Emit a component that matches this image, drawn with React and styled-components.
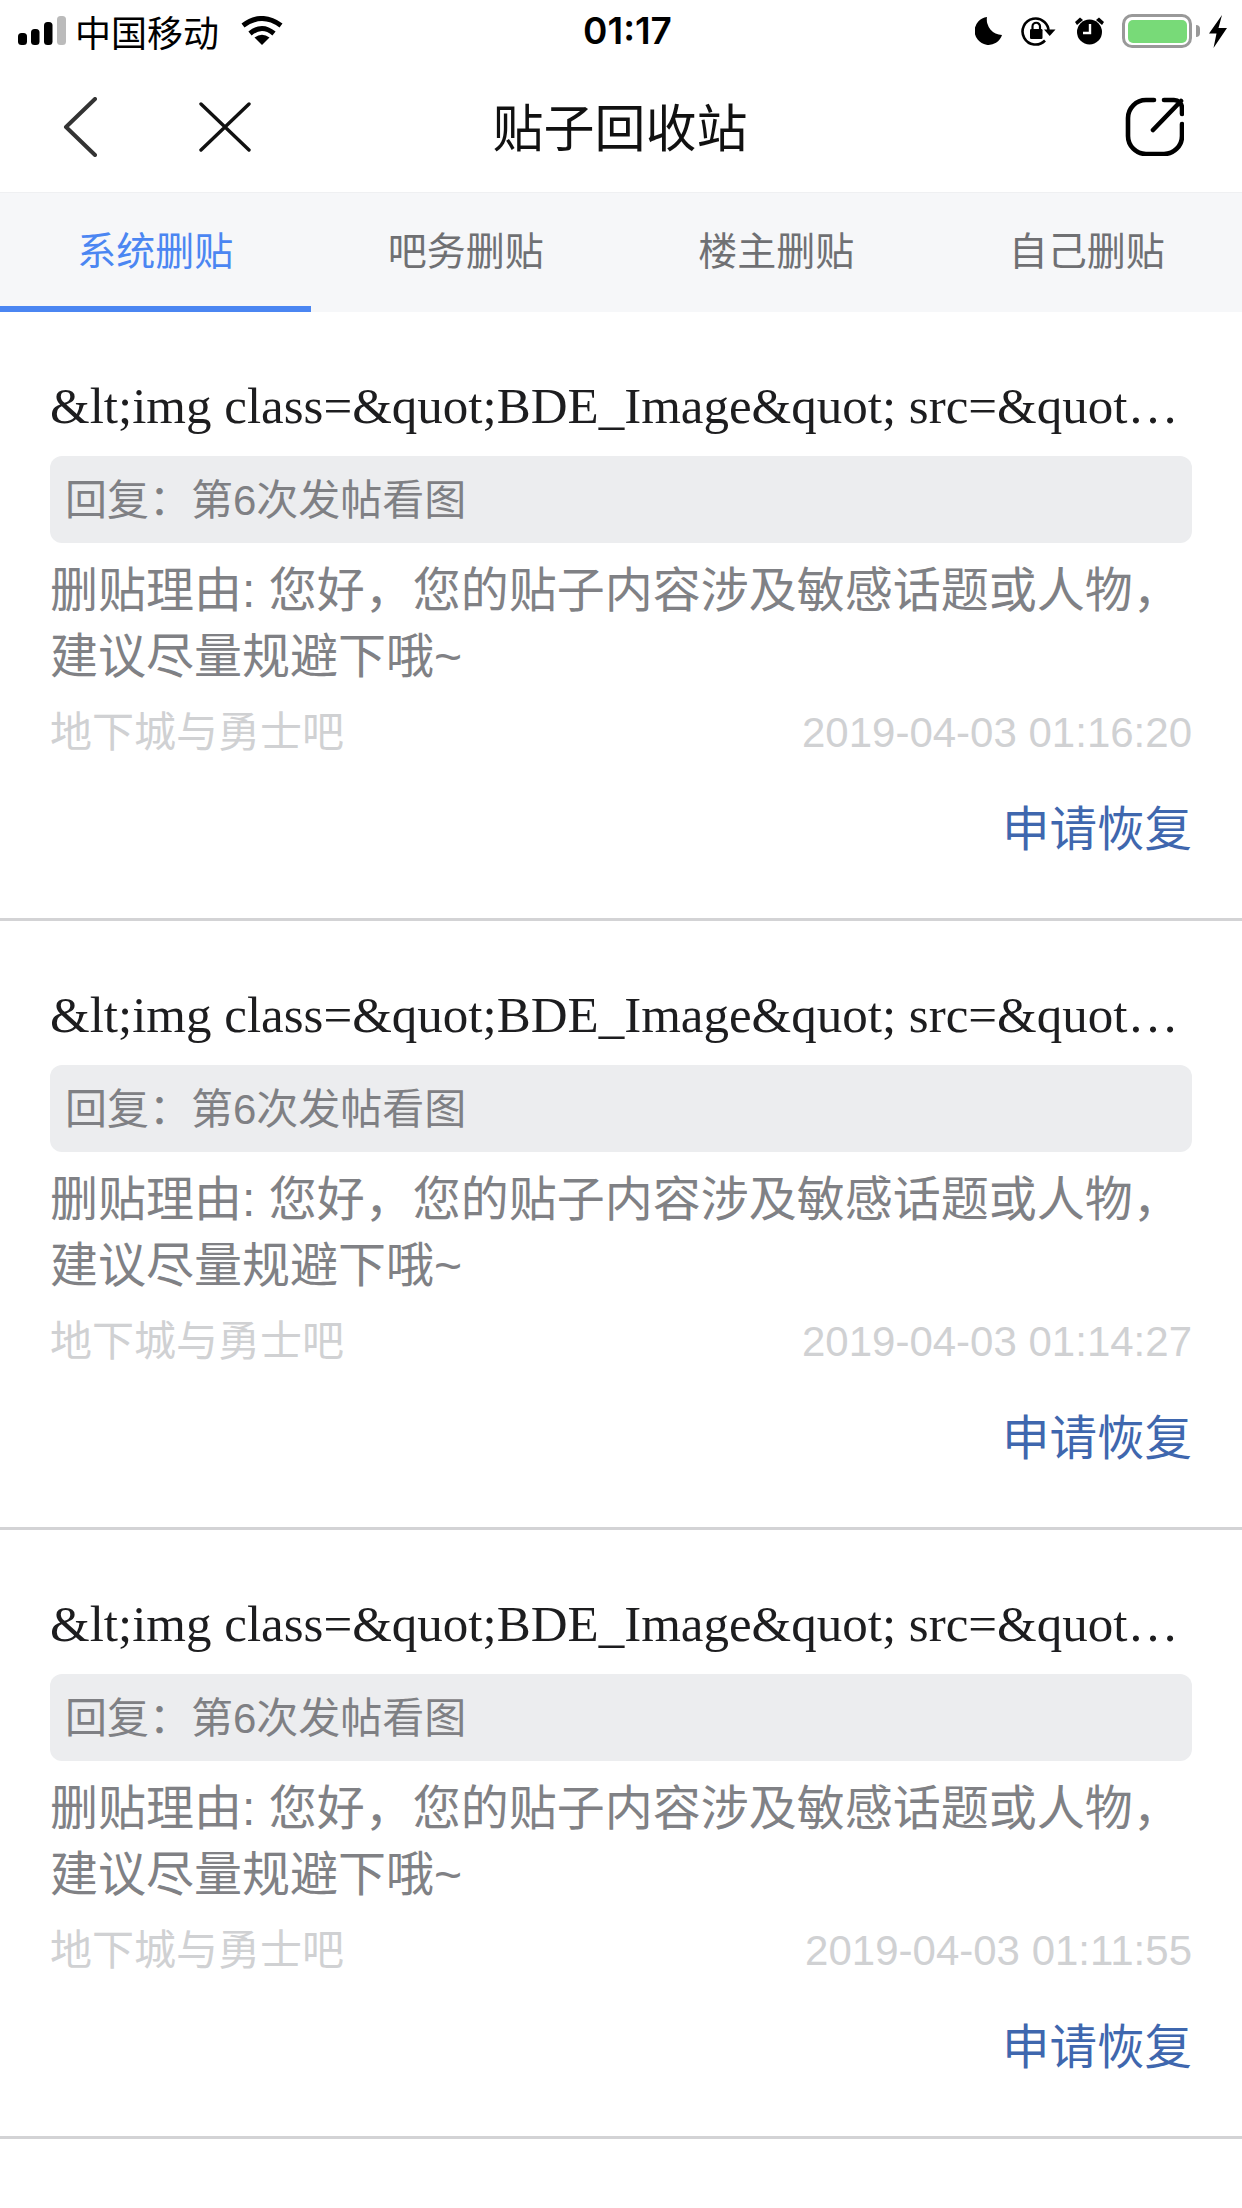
import React from "react";
import styled, { createGlobalStyle } from "styled-components";

const Global = createGlobalStyle`
  html, body { margin: 0; padding: 0; background: #fff; }
  * { box-sizing: border-box; }
`;
const SANS = `"Liberation Sans", "Noto Sans CJK SC", sans-serif`;
const SERIF = `"Liberation Serif", "Noto Sans CJK SC", serif`;

const Page = styled.div`
  width: 1242px;
  height: 2208px;
  overflow: hidden;
  background: #fff;
  font-family: ${SANS};
`;
const StatusBar = styled.div`
  height: 62px;
  display: grid;
  grid-template-columns: 1fr auto 1fr;
  align-items: center;
  padding: 0 15px 0 18px;
  color: #000;
`;
const StatusLeft = styled.div`
  display: flex;
  align-items: center;
`;
const Carrier = styled.span`
  font-family: "Noto Sans CJK SC", sans-serif;
  font-size: 36px;
  line-height: 40px;
  margin: 0 22px 0 9px;
`;
const Clock = styled.span`
  font-family: Inter, sans-serif;
  font-weight: 600;
  font-size: 37px;
  line-height: 40px;
  margin-left: 10px;
`;
const StatusRight = styled.div`
  display: flex;
  align-items: center;
  justify-content: flex-end;
  gap: 19px;
`;
const BatteryGroup = styled.div`
  display: flex;
  align-items: center;
  margin-left: -1px;
`;
const Battery = styled.div`
  width: 70px;
  height: 34px;
  border: 3.5px solid #999;
  border-radius: 10px;
  padding: 2.5px;
  position: relative;
  &::after {
    content: "";
    position: absolute;
    right: -11px;
    top: 7.5px;
    width: 4px;
    height: 12px;
    background: #999;
    border-radius: 0 4px 4px 0;
  }
`;
const BatteryFill = styled.div`
  height: 100%;
  background: #78da78;
  border-radius: 5px;
`;
const Bolt = styled.svg`
  margin-left: 17px;
`;
const NavBar = styled.div`
  height: 130px;
  display: grid;
  grid-template-columns: 1fr auto 1fr;
  align-items: center;
  padding: 0 58px 2px 63px;
`;
const NavLeft = styled.div`
  display: flex;
  align-items: center;
  gap: 102px;
  margin-top: 2px;
`;
const NavRight = styled.div`
  display: flex;
  justify-content: flex-end;
`;
const Title = styled.h1`
  margin: 0 7px 3px 0;
  font-family: "Noto Sans CJK SC", sans-serif;
  font-weight: 400;
  font-size: 51px;
  line-height: 70px;
  color: #111;
`;
const Tabs = styled.div`
  height: 120px;
  display: grid;
  grid-template-columns: repeat(4, 1fr);
  background: #f6f7f9;
  border-top: 1px solid #eff0f2;
`;
const Tab = styled.div`
  display: flex;
  align-items: center;
  justify-content: center;
  padding-bottom: 3px;
  font-family: "Noto Sans CJK SC", sans-serif;
  font-size: 39px;
  color: ${p => (p.$active ? "#4b86f2" : "#6f7073")};
  border-bottom: 6px solid ${p => (p.$active ? "#4b86f2" : "transparent")};
`;
const Card = styled.article`
  height: 609px;
  padding: 64px 50px 0;
  border-bottom: 3px solid #d3d3d5;
`;
const PostTitle = styled.div`
  font-family: ${SERIF};
  font-size: 51px;
  line-height: 60px;
  color: #1d1d1f;
  white-space: nowrap;
`;
const Quote = styled.div`
  height: 87px;
  margin-top: 20px;
  padding: 0 15px 6px;
  display: flex;
  align-items: center;
  background: #ecedef;
  border-radius: 12px;
  font-size: 42px;
  color: #7f8084;
`;
const Reason = styled.div`
  margin-top: 15px;
  font-size: 48px;
  line-height: 66px;
  color: #808185;
`;
const Meta = styled.div`
  margin-top: 18px;
  display: flex;
  justify-content: space-between;
  align-items: center;
  font-size: 42px;
  line-height: 50px;
  color: #d0d1d3;
`;
const Action = styled.div`
  margin-top: 42px;
  text-align: right;
  font-size: 47.5px;
  line-height: 60px;
  color: #3f67ae;
`;

const posts = ["01:16:20", "01:14:27", "01:11:55"];
const tabs = ["系统删贴", "吧务删贴", "楼主删贴", "自己删贴"];

const Signal = () => (
  <svg width="48" height="30" viewBox="0 0 48 30">
    <rect x="0" y="17" width="9" height="12" rx="3.5" fill="#000" />
    <rect x="13" y="13" width="8.5" height="16" rx="3.5" fill="#000" />
    <rect x="26" y="6" width="8.5" height="23" rx="3.5" fill="#000" />
    <rect x="39" y="0" width="9" height="29" rx="3.5" fill="#bbb" />
  </svg>
);
const Wifi = () => (
  <svg width="42" height="30" viewBox="0 0 42 30">
    <path d="M2 9.5Q21 -4.5 40 9.5" fill="none" stroke="#000" strokeWidth="5" />
    <path d="M9 17.5Q21 7.5 33 17.5" fill="none" stroke="#000" strokeWidth="5" />
    <path d="M21 29L13.5 21.5Q21 16 28.5 21.5Z" fill="#000" />
  </svg>
);
const Moon = () => (
  <svg width="27" height="28" viewBox="0 0 27 28">
    <path d="M12 0A14 14 0 1 0 27 18A15.5 15.5 0 0 1 12 0Z" fill="#000" />
  </svg>
);
const RotationLock = () => (
  <svg width="35" height="30" viewBox="0 0 35 30">
    <path d="M27.5 17A13 13 0 1 0 24 24.5" fill="none" stroke="#000" strokeWidth="2.6" />
    <path d="M23 13.5H34.5L28.7 20Z" fill="#000" />
    <rect x="9" y="13" width="12.5" height="10" rx="1.2" fill="#000" />
    <path d="M11.5 13V10.5A3.7 3.7 0 0 1 19 10.5V13" fill="none" stroke="#000" strokeWidth="2.2" />
  </svg>
);
const Alarm = () => (
  <svg width="29" height="28" viewBox="0 0 29 28">
    <circle cx="14.5" cy="15" r="12.5" fill="#000" />
    <path d="M15 7V16H8" fill="none" stroke="#fff" strokeWidth="2.4" />
    <path d="M0 5L5 0.5L8 3L2 8Z" fill="#000" />
    <path d="M29 5L24 0.5L21 3L27 8Z" fill="#000" />
  </svg>
);
const Back = () => (
  <svg width="34" height="60" viewBox="0 0 34 60">
    <path d="M32 2L3 30L32 58" fill="none" stroke="#333" strokeWidth="4" strokeLinecap="round" strokeLinejoin="round" />
  </svg>
);
const Close = () => (
  <svg width="52" height="50" viewBox="0 0 52 50">
    <path d="M2 2L50 48M50 2L2 48" fill="none" stroke="#111" strokeWidth="3.4" strokeLinecap="round" />
  </svg>
);
const Share = () => (
  <svg width="60" height="60" viewBox="0 0 60 60">
    <path
      d="M30 4H22A18 18 0 0 0 4 22V40A18 18 0 0 0 22 58H40A18 18 0 0 0 58 40V28M58 18V12A8 8 0 0 0 50 4H40M57 5L29 34"
      fill="none"
      stroke="#000"
      strokeWidth="4.6"
      strokeLinecap="round"
    />
  </svg>
);

export default function App() {
  return (
    <Page>
      <Global />
      <StatusBar>
        <StatusLeft>
          <Signal />
          <Carrier>中国移动</Carrier>
          <Wifi />
        </StatusLeft>
        <Clock>01:17</Clock>
        <StatusRight>
          <Moon />
          <RotationLock />
          <Alarm />
          <BatteryGroup>
            <Battery>
              <BatteryFill />
            </Battery>
            <Bolt width="18" height="33" viewBox="0 0 18 33">
              <path d="M13 0L0 18.5H7.5L4.5 33L18 13H9.5Z" fill="#000" />
            </Bolt>
          </BatteryGroup>
        </StatusRight>
      </StatusBar>
      <NavBar>
        <NavLeft>
          <Back />
          <Close />
        </NavLeft>
        <Title>贴子回收站</Title>
        <NavRight>
          <Share />
        </NavRight>
      </NavBar>
      <Tabs>
        {tabs.map((t, i) => (
          <Tab key={t} $active={i === 0}>{t}</Tab>
        ))}
      </Tabs>
      {posts.map(time => (
        <Card key={time}>
          <PostTitle>&amp;lt;img class=&amp;quot;BDE_Image&amp;quot; src=&amp;quot…</PostTitle>
          <Quote>回复：第6次发帖看图</Quote>
          <Reason>删贴理由: 您好，您的贴子内容涉及敏感话题或人物，建议尽量规避下哦~</Reason>
          <Meta>
            <span>地下城与勇士吧</span>
            <span>2019-04-03 {time}</span>
          </Meta>
          <Action>申请恢复</Action>
        </Card>
      ))}
    </Page>
  );
}
